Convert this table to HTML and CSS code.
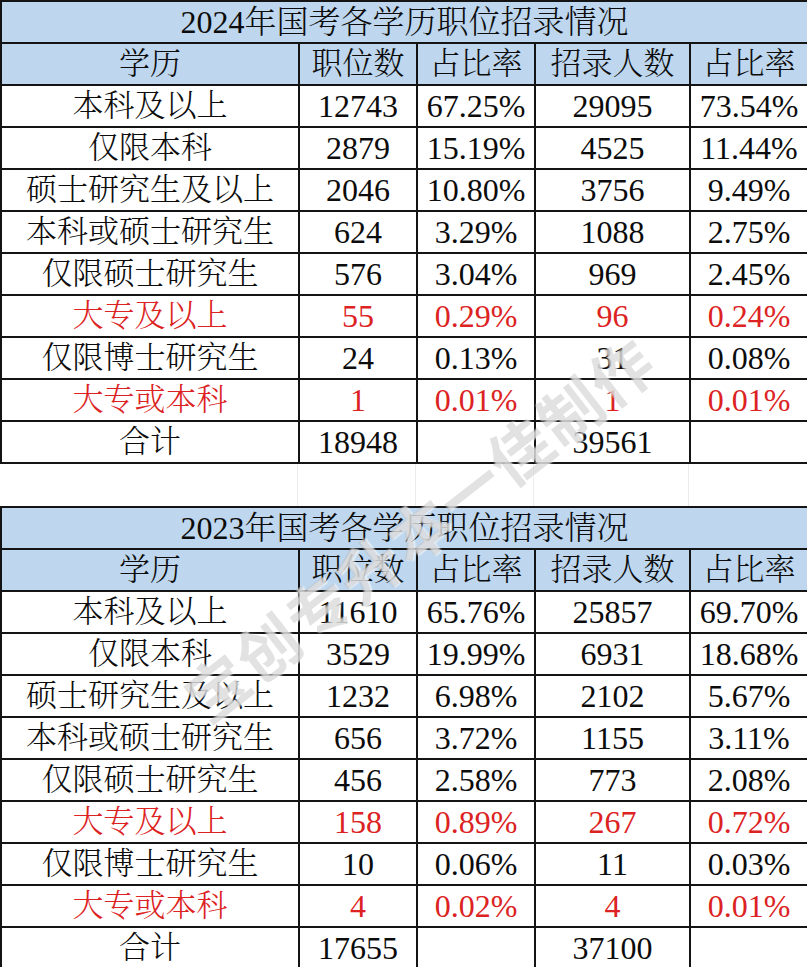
FILE: index.html
```html
<!DOCTYPE html>
<html lang="zh-CN">
<head>
<meta charset="utf-8">
<title>国考各学历职位招录情况</title>
<link rel="stylesheet" href="styles.css">
</head>
<body>
<div class="sheet">
  <table class="tbl">
    <colgroup><col class="c1"><col class="c2"><col class="c3"><col class="c4"><col class="c5"></colgroup>
    <tr class="title"><td colspan="5">2024年国考各学历职位招录情况</td></tr>
    <tr class="head"><td>学历</td><td>职位数</td><td>占比率</td><td>招录人数</td><td>占比率</td></tr>
    <tr><td>本科及以上</td><td class="n">12743</td><td class="n">67.25%</td><td class="n">29095</td><td class="n">73.54%</td></tr>
    <tr><td>仅限本科</td><td class="n">2879</td><td class="n">15.19%</td><td class="n">4525</td><td class="n">11.44%</td></tr>
    <tr><td>硕士研究生及以上</td><td class="n">2046</td><td class="n">10.80%</td><td class="n">3756</td><td class="n">9.49%</td></tr>
    <tr><td>本科或硕士研究生</td><td class="n">624</td><td class="n">3.29%</td><td class="n">1088</td><td class="n">2.75%</td></tr>
    <tr><td>仅限硕士研究生</td><td class="n">576</td><td class="n">3.04%</td><td class="n">969</td><td class="n">2.45%</td></tr>
    <tr class="red"><td>大专及以上</td><td class="n">55</td><td class="n">0.29%</td><td class="n">96</td><td class="n">0.24%</td></tr>
    <tr><td>仅限博士研究生</td><td class="n">24</td><td class="n">0.13%</td><td class="n">31</td><td class="n">0.08%</td></tr>
    <tr class="red"><td>大专或本科</td><td class="n">1</td><td class="n">0.01%</td><td class="n">1</td><td class="n">0.01%</td></tr>
    <tr><td>合计</td><td class="n">18948</td><td></td><td class="n">39561</td><td></td></tr>
  </table>
  <div class="gap"><span></span><span></span><span></span><span></span><span></span></div>
  <table class="tbl">
    <colgroup><col class="c1"><col class="c2"><col class="c3"><col class="c4"><col class="c5"></colgroup>
    <tr class="title"><td colspan="5">2023年国考各学历职位招录情况</td></tr>
    <tr class="head"><td>学历</td><td>职位数</td><td>占比率</td><td>招录人数</td><td>占比率</td></tr>
    <tr><td>本科及以上</td><td class="n">11610</td><td class="n">65.76%</td><td class="n">25857</td><td class="n">69.70%</td></tr>
    <tr><td>仅限本科</td><td class="n">3529</td><td class="n">19.99%</td><td class="n">6931</td><td class="n">18.68%</td></tr>
    <tr><td>硕士研究生及以上</td><td class="n">1232</td><td class="n">6.98%</td><td class="n">2102</td><td class="n">5.67%</td></tr>
    <tr><td>本科或硕士研究生</td><td class="n">656</td><td class="n">3.72%</td><td class="n">1155</td><td class="n">3.11%</td></tr>
    <tr><td>仅限硕士研究生</td><td class="n">456</td><td class="n">2.58%</td><td class="n">773</td><td class="n">2.08%</td></tr>
    <tr class="red"><td>大专及以上</td><td class="n">158</td><td class="n">0.89%</td><td class="n">267</td><td class="n">0.72%</td></tr>
    <tr><td>仅限博士研究生</td><td class="n">10</td><td class="n">0.06%</td><td class="n">11</td><td class="n">0.03%</td></tr>
    <tr class="red"><td>大专或本科</td><td class="n">4</td><td class="n">0.02%</td><td class="n">4</td><td class="n">0.01%</td></tr>
    <tr><td>合计</td><td class="n">17655</td><td></td><td class="n">37100</td><td></td></tr>
  </table>
  <div class="watermark">宝创专升本一佳制作</div>
</div>
</body>
</html>
```
FILE: styles.css
```css
html, body {
  margin: 0;
  padding: 0;
  background: #ffffff;
}

.sheet {
  position: relative;
  width: 807px;
  height: 967px;
  overflow: hidden;
  font-family: "Liberation Serif", "Noto Serif CJK SC", "Noto Sans CJK SC", serif;
  color: #0c0c0c;
}

.tbl {
  width: 807px;
  table-layout: fixed;
  border-collapse: collapse;
}

.c1 { width: 298px; }
.c2 { width: 118px; }
.c3 { width: 118px; }
.c4 { width: 155px; }
.c5 { width: 118px; }

.tbl td {
  height: 40px;
  padding: 0;
  border: 2px solid #141414;
  text-align: center;
  vertical-align: middle;
  font-size: 31px;
  font-weight: 300;
  line-height: 40px;
  white-space: nowrap;
  overflow: hidden;
}

.title td {
  font-size: 32px;
}

.tbl td.n {
  font-size: 32px;
  font-weight: 400;
}

.title td,
.head td {
  background: #bed7ee;
}

.red td {
  color: #dc2222;
}

.gap {
  display: grid;
  grid-template-columns: 298px 118px 118px 155px 118px;
  height: 42px;
}

.gap span {
  border-right: 1px solid #ececec;
}

.gap span:last-child {
  border-right: none;
}

.watermark {
  position: absolute;
  left: 130px;
  top: 482px;
  font-family: "Noto Sans CJK SC", sans-serif;
  font-weight: 700;
  font-size: 62px;
  letter-spacing: 2px;
  color: rgba(150, 150, 150, 0.28);
  text-shadow: 1px 1px 2px rgba(255, 255, 255, 0.8);
  transform: rotate(-38deg);
  transform-origin: center center;
  white-space: nowrap;
  pointer-events: none;
}
```
